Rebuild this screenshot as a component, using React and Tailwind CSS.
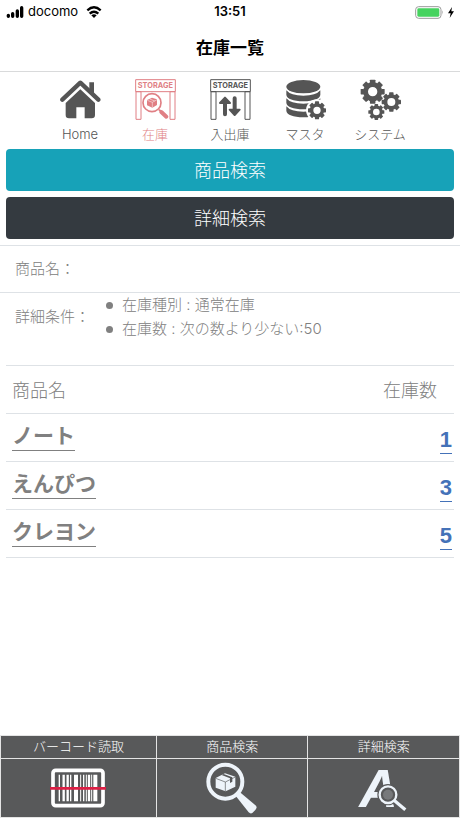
const stocks = [
    { id: 1, name: "ノート", count: 1 },
    { id: 2, name: "えんぴつ", count: 3 },
    { id: 3, name: "クレヨン", count: 5 },
]

const Gear = ({ cx, cy, r, hole, teeth = 8 }) => {
    const body = r * 0.8
    const tooth = r * 0.46
    return (
        <g transform={`translate(${cx} ${cy})`}>
            <circle r={(body + hole) / 2} fill="none" stroke="currentColor" strokeWidth={body - hole} />
            {Array.from({ length: teeth }, (_, i) => (
                <rect
                    key={i}
                    x={-tooth / 2}
                    y={-r}
                    width={tooth}
                    height={r - body + 3}
                    rx="2"
                    fill="currentColor"
                    transform={`rotate(${(360 / teeth) * i})`}
                />
            ))}
        </g>
    )
}

const HomeIcon = () => (
    <svg viewBox="0 0 123 123" className="size-[41px]" fill="currentColor" aria-hidden="true">
        <path d="M88 10h14v36L88 33z" />
        <path d="M7 62 61 11l54 51" fill="none" stroke="currentColor" strokeWidth="13" strokeLinecap="round" strokeLinejoin="round" />
        <path d="M61 31l44 41v36q0 10-10 10H74V85H49v33H27q-10 0-10-10V72z" />
    </svg>
)

const StorageFrame = ({ children }) => (
    <svg viewBox="0 0 123 123" className="size-[41px]" fill="none" stroke="currentColor" strokeWidth="3" aria-hidden="true">
        <path d="M2 2h119v36H2zM3 38h15v83H3zM105 38h15v83h-15z" />
        <text x="61" y="28" textAnchor="middle" fontSize="22" fontWeight="700" fontFamily="Inter, sans-serif" fill="currentColor" stroke="none">STORAGE</text>
        {children}
    </svg>
)

const StockIcon = () => (
    <StorageFrame>
        <circle cx="51" cy="71" r="27" strokeWidth="5" />
        <path d="M72 92l6 6" strokeWidth="6" />
        <path d="M79 99l15 14" strokeWidth="12" strokeLinecap="round" />
        <path d="M36 63l15-7 15 5v17l-14 8-16-7z" fill="currentColor" stroke="none" />
        <path d="M37 64l15 6 14-8M52 70v15M44 60l15 6" stroke="#fff" strokeWidth="1.5" />
    </StorageFrame>
)

const InOutIcon = () => (
    <StorageFrame>
        <path d="M45 106V70M74 58v38" strokeWidth="12" strokeLinecap="round" />
        <path d="M30 72l15-16 15 16zM59 92l15 16 15-16z" fill="currentColor" strokeWidth="6" strokeLinejoin="round" />
    </StorageFrame>
)

const MasterIcon = () => (
    <svg viewBox="0 0 123 123" className="size-[41px]" fill="currentColor" aria-hidden="true">
        <ellipse cx="55" cy="23" rx="51" ry="20" />
        {[34, 58, 82].map(y => (
            <path key={y} transform={`translate(4 ${y})`} d="M0 0Q13 16 51 16T102 0V14Q98 32 51 33Q4 32 0 14z" />
        ))}
        <circle cx="96" cy="94" r="33" fill="#fff" />
        <Gear cx={96} cy={94} r={27} hole={11} />
    </svg>
)

const SystemIcon = () => (
    <svg viewBox="0 0 129 123" className="h-[41px] w-[43px]" fill="currentColor" aria-hidden="true">
        <Gear cx={41} cy={38} r={36} hole={14} />
        <Gear cx={97} cy={69} r={29} hole={12} />
        <Gear cx={52} cy={99} r={24} hole={10} />
    </svg>
)

const BarcodeIcon = () => (
    <svg viewBox="0 0 168 120" className="h-10 w-14" aria-hidden="true">
        <rect x="9" y="7" width="150" height="106" rx="8" fill="none" stroke="#fff" strokeWidth="11" />
        <path d="M28 20v80M62 20v80M101 20v80" stroke="#fff" strokeWidth="4" />
        <path d="M41 20v80M53 20v80M117 20v80" stroke="#fff" strokeWidth="7" />
        <path d="M78 20v80M136 20v80" stroke="#fff" strokeWidth="12" />
        <path d="M92 20v80M109 20v80M125 20v80" stroke="#fff" strokeWidth="3" />
        <path d="M0 61h168" stroke="#dc1f45" strokeWidth="8" />
    </svg>
)

const ItemSearchIcon = () => (
    <svg viewBox="0 0 156 156" className="size-[52px]" fill="#eef4fa" aria-hidden="true">
        <circle cx="58" cy="59" r="51" fill="none" stroke="#eef4fa" strokeWidth="12" />
        <path d="M90 103l12-12 48 40q4 6-2 13l-9 9q-6 3-11-2z" />
        <path d="M29 48l28-14 31 10v30L59 88 29 77z" />
        <path d="M29 49l29 11 30-15M58 60v27" fill="none" stroke="#58595a" strokeWidth="2" />
        <path d="M47 39l25 10v14l7-4V46L53 36z" fill="#58595a" />
    </svg>
)

const DetailSearchIcon = () => (
    <svg viewBox="0 -12 156 180" className="h-[60px] w-[52px] shrink-0" aria-hidden="true">
        <text x="4" y="134" fontSize="160" fontStyle="italic" fontWeight="700" fontFamily="Liberation Sans, sans-serif" fill="#eef4fa">A</text>
        <circle cx="90" cy="98" r="32" fill="#58595a" />
        <path d="M110 117l34 30" stroke="#58595a" strokeWidth="20" />
        <circle cx="90" cy="98" r="15" fill="#77797b" />
        <circle cx="90" cy="98" r="25" fill="none" stroke="#eef4fa" strokeWidth="7" />
        <path d="M108 115l34 28" stroke="#eef4fa" strokeWidth="10" />
    </svg>
)

const menus = [
    { label: "Home", icon: <HomeIcon /> },
    { label: "在庫", icon: <StockIcon />, active: true },
    { label: "入出庫", icon: <InOutIcon /> },
    { label: "マスタ", icon: <MasterIcon /> },
    { label: "システム", icon: <SystemIcon /> },
]

const footerMenus = [
    { label: "バーコード読取", icon: <BarcodeIcon /> },
    { label: "商品検索", icon: <ItemSearchIcon /> },
    { label: "詳細検索", icon: <DetailSearchIcon /> },
]

const StatusBar = () => (
    <div className="grid h-6 grid-cols-3 items-center px-[6px] font-['Inter',sans-serif] text-[13px] text-black">
        <div className="flex items-center gap-1">
            <svg viewBox="0 0 54 36" className="h-3 w-[18px]" aria-hidden="true">
                <path d="M7 28v3M20 23v8M34 15v16M47 5v26" stroke="#000" strokeWidth="10" strokeLinecap="round" />
            </svg>
            <span>docomo</span>
            <svg viewBox="0 0 46 36" className="ml-1 h-3 w-4" fill="none" stroke="#000" strokeWidth="7" aria-hidden="true">
                <path d="M3 13Q23-5 43 13M10 23Q23 11 36 23" />
                <path d="M23 36l-8-8q8-6 16 0z" fill="#000" stroke="none" />
            </svg>
        </div>
        <span className="text-center font-semibold">13:51</span>
        <div className="flex items-center justify-end gap-1">
            <svg viewBox="0 0 87 39" className="h-[13px] w-[29px]" aria-hidden="true">
                <rect x="2" y="2" width="76" height="35" rx="9" fill="#fff" stroke="#9b9b9b" strokeWidth="3" />
                <rect x="7" y="7" width="66" height="25" rx="4" fill="#46d35f" />
                <path d="M82 13q5 6 0 13z" fill="#9b9b9b" />
            </svg>
            <svg viewBox="0 0 18 33" className="h-[11px] w-[6px]" aria-hidden="true">
                <path d="M12 0L0 19h8L5 33 18 13h-8z" />
            </svg>
        </div>
    </div>
)

const App = () => {
    return (
        <div className="flex min-h-screen flex-col bg-white font-['Liberation_Sans','Noto_Sans_CJK_JP',sans-serif] text-[#808080]">
            <StatusBar />

            <header className="flex h-12 items-center justify-center border-b border-[#d9dadb] pt-[2px]">
                <h1 className="text-[17px] font-bold text-black">在庫一覧</h1>
            </header>

            <nav className="flex justify-center pt-[7px]">
                {menus.map(menu => (
                    <a
                        key={menu.label}
                        href="#"
                        className={`flex w-[75px] flex-col items-center ${menu.active ? "text-[#e07f84]" : "text-[#555]"}`}
                    >
                        {menu.icon}
                        <span className="mt-1 text-[13px] leading-5 font-light font-['Inter','Noto_Sans_CJK_JP',sans-serif]">{menu.label}</span>
                    </a>
                ))}
            </nav>

            <main className="flex-1">
                <div className="flex flex-col gap-[6px] px-[6px] pt-[5px] pb-[6px] text-[18px] font-light text-white">
                    <button type="button" className="h-[42px] rounded bg-[#17a2b8] pt-[3px]">商品検索</button>
                    <button type="button" className="h-[42px] rounded bg-[#343a40] pt-[3px]">詳細検索</button>
                </div>

                <dl className="text-[15px] font-light">
                    <div className="flex h-[47px] items-center border-t border-[#dee2e6] px-[15px]">
                        <dt>商品名：</dt>
                        <dd></dd>
                    </div>
                    <div className="flex h-[73px] items-start border-t border-[#dee2e6] px-[15px]">
                        <dt className="w-[91px] shrink-0 pt-3 leading-6">詳細条件：</dt>
                        <dd>
                            <ul className="leading-6 font-['Inter','Noto_Sans_CJK_JP',sans-serif]">
                                {["在庫種別 : 通常在庫", "在庫数 : 次の数より少ない:50"].map(text => (
                                    <li key={text} className="flex items-center gap-[9px]">
                                        <span className="size-[7px] rounded-full bg-[#808080]"></span>
                                        {text}
                                    </li>
                                ))}
                            </ul>
                        </dd>
                    </div>
                </dl>

                <div className="px-[6px]">
                    <table className="w-full border-separate border-spacing-0">
                        <thead>
                            <tr className="h-[49px] text-[18px]">
                                <th className="border-y border-[#dee2e6] px-[6px] pt-[3px] text-left font-light">商品名</th>
                                <th className="border-y border-[#dee2e6] pt-[3px] pr-[17px] text-right font-light">在庫数</th>
                            </tr>
                        </thead>
                        <tbody>
                            {stocks.map(stock => (
                                <tr key={stock.id} className="h-12 font-bold">
                                    <td className="border-b border-[#dee2e6] px-[6px] pt-[8px] align-top">
                                        <a href="#" className="inline-block border-b border-[#808080] text-[21px] leading-7">{stock.name}</a>
                                    </td>
                                    <td className="border-b border-[#dee2e6] pr-[2px] pt-[13px] text-right align-top">
                                        <a href="#" className="inline-block border-b border-[#4472b8] text-[22px] leading-[26px] text-[#4472b8]">{stock.count}</a>
                                    </td>
                                </tr>
                            ))}
                        </tbody>
                    </table>
                </div>
            </main>

            <footer className="sticky bottom-0 grid grid-cols-[104fr_101fr_101fr] gap-px bg-[#e4e4e4] p-px text-[13px] font-light text-white">
                {footerMenus.map(menu => (
                    <button key={menu.label} type="button" className="flex flex-col bg-[#58595a]">
                        <span className="w-full border-b border-[#e4e4e4] leading-[22px]">{menu.label}</span>
                        <span className="flex h-[58px] w-full items-center justify-center">{menu.icon}</span>
                    </button>
                ))}
            </footer>
        </div>
    )
}

export default App
